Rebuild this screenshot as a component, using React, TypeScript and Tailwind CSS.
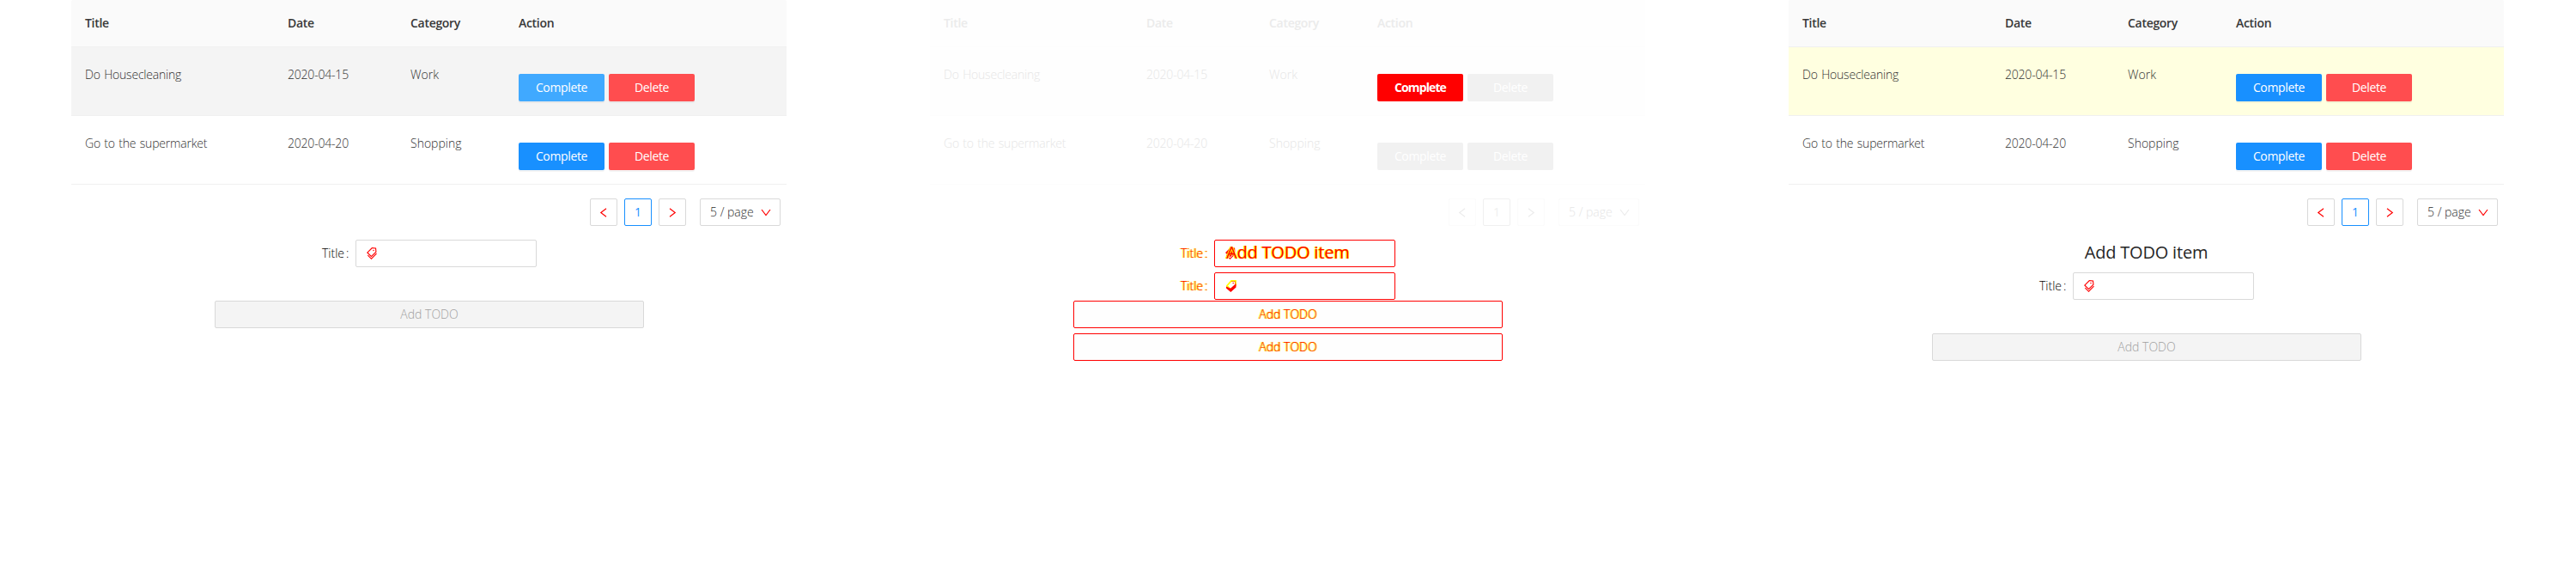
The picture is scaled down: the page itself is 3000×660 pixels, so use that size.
import { AiFillTags, AiOutlineTags } from "react-icons/ai";

type Variant = "before" | "diff" | "after";

const rows = [
  { title: "Do Housecleaning", date: "2020-04-15", category: "Work" },
  { title: "Go to the supermarket", date: "2020-04-20", category: "Shopping" },
];

const cols = "grid grid-cols-[236px_143px_126px_1fr]";
const fringe = "[text-shadow:1px_0_#ffff00,-1px_0_#ffff00]";

function TodoTable({ variant }: { variant: Variant }) {
  const diff = variant === "diff";
  const line = diff ? "border-[#fdfdfd]" : "border-[#f0f0f0]";
  const head = diff ? "bg-[#fefefe] text-[#ebebeb]" : "bg-[#fafafa] text-[#383838]";
  const body = diff ? "text-[#e6e6e6]" : "text-[#303030]";
  const firstRow = diff ? "bg-[#fefefe]" : variant === "before" ? "bg-[#f4f4f4]" : "bg-[#ffffe0]";
  const firstComplete = diff
    ? "bg-[#ff0000] font-bold tracking-[-0.9px]"
    : variant === "before"
      ? "bg-[#40a9ff] tracking-[-0.35px]"
      : "bg-[#1890ff] tracking-[-0.35px]";
  const shadow = diff ? "" : "shadow-[0_2px_0_rgba(0,0,0,0.045)]";
  const btn = "flex h-8 w-[100px] items-center justify-center rounded-[2px] text-white";
  return (
    <div>
      <div className={`${cols} h-[55px] items-center border-b pl-4 font-semibold tracking-[-0.3px] ${line} ${head} ${diff ? "" : "rounded-t-[2px]"}`}>
        <span>Title</span>
        <span>Date</span>
        <span>Category</span>
        <span>Action</span>
      </div>
      {rows.map((r, i) => (
        <div key={r.title} className={`${cols} h-20 items-start border-b pl-4 pt-[21px] font-light tracking-[-0.2px] [word-spacing:1px] ${line} ${body} ${i === 0 ? firstRow : ""}`}>
          <span>{r.title}</span>
          <span>{r.date}</span>
          <span className="tracking-normal">{r.category}</span>
          <div className="mt-2.5 flex gap-[5px] font-normal">
            <div className={`${btn} ${shadow} ${i === 0 ? firstComplete : diff ? "bg-[#f1f1f1] tracking-[-0.35px]" : "bg-[#1890ff] tracking-[-0.35px]"}`}>Complete</div>
            <div className={`${btn} ${shadow} tracking-[-0.35px] ${diff ? "bg-[#f1f1f1]" : "bg-[#ff4d4f]"}`}>Delete</div>
          </div>
        </div>
      ))}
    </div>
  );
}

function Chevron({ d, className = "" }: { d: string; className?: string }) {
  return (
    <svg width="12" height="12" viewBox="0 0 12 12" fill="none" stroke="currentColor" strokeWidth="1.2" className={className}>
      <path d={d} />
    </svg>
  );
}

function Pager({ diff }: { diff: boolean }) {
  const box = `flex size-8 items-center justify-center rounded-[2px] border ${diff ? "border-[#fbfbfb] text-[#ececec]" : "border-[#d9d9d9] text-[#ff0000]"}`;
  return (
    <div className="flex h-8 justify-end pr-[7px]">
      <div className={box}><Chevron d="M9 1.800 2.800 6.500 9 11.200" /></div>
      <div className={`ml-2 flex size-8 items-center justify-center rounded-[2px] border ${diff ? "border-[#f0f0f0] text-[#f0f0f0]" : "border-[#1890ff] text-[#1890ff]"}`}>1</div>
      <div className={`ml-2 ${box}`}><Chevron d="M3 1.800 9.200 6.500 3 11.200" /></div>
      <div className={`ml-4 flex h-8 w-[94px] items-center rounded-[2px] border pl-[11px] font-light ${diff ? "border-[#fbfbfb] text-[#e6e6e6]" : "border-[#d9d9d9] text-[#303030]"}`}>
        <span className="w-[59px] whitespace-nowrap">5 / page</span>
        <Chevron d="M1 3 6 9.600 11 3" className={diff ? "text-[#ececec]" : "text-[#ff0000]"} />
      </div>
    </div>
  );
}

function DiffTags() {
  return (
    <svg width="14" height="16" viewBox="0 0 14 16" fill="none">
      <path d="M2 7.500 7 2h5v5L6.500 12 2 8Z" stroke="#ffff00" strokeWidth="1.8" />
      <path d="M7 2.500h4.500v4" stroke="#ff7a00" strokeWidth="0.8" />
      <path d="M1 8.500 6 10.800 12.500 5v4.500L6.300 15 1 10.500Z" fill="#ff0000" />
      <path d="M8.500 4.500h1.500" stroke="#ff0000" />
    </svg>
  );
}

function TitleField({ diff, overlapped }: { diff?: boolean; overlapped?: boolean }) {
  return (
    <div className="flex h-8 items-center pl-[292px]">
      <span className={`flex w-[39px] gap-[2px] whitespace-nowrap font-light ${diff ? `text-[#ff0000] ${fringe}` : "text-black"}`}>
        <span>Title</span>
        <span>:</span>
      </span>
      <div className={`flex h-8 w-[211px] items-center rounded-[2px] border pl-[10px] ${diff ? "border-[#ff0000]" : "border-[#d9d9d9]"}`}>
        {!diff && <AiOutlineTags size={16} className="text-[#ff0000]" />}
        {diff && overlapped && <AiFillTags size={16} className="text-[#ff0000]" />}
        {diff && !overlapped && <div className="pl-0.5"><DiffTags /></div>}
      </div>
    </div>
  );
}

function AddButton({ diff }: { diff?: boolean }) {
  return (
    <div className={`ml-[167px] flex h-8 w-[500px] items-center justify-center rounded-[2px] border font-light ${diff ? `border-[#ff0000] bg-[#fefefe] text-[#ff0000] ${fringe}` : "border-[#d9d9d9] bg-[#f4f4f4] text-[#a0a0a0]"}`}>
      Add TODO
    </div>
  );
}

function Panel({ variant }: { variant: Variant }) {
  const diff = variant === "diff";
  return (
    <section className="w-[1000px] pl-[83px] pr-[84px]">
      <TodoTable variant={variant} />
      <div className="py-4"><Pager diff={diff} /></div>
      {variant === "before" && (
        <div>
          <TitleField />
          <div className="pt-[39px]"><AddButton /></div>
        </div>
      )}
      {variant === "diff" && (
        <div>
          <div className="relative">
            <TitleField diff overlapped />
            <span className={`absolute left-[345px] top-0 whitespace-nowrap text-xl font-normal leading-[30px] tracking-[-0.2px] text-[#ff0000] ${fringe}`}>Add TODO item</span>
          </div>
          <div className="pt-1.5"><TitleField diff /></div>
          <div className="pt-px"><AddButton diff /></div>
          <div className="pt-1.5"><AddButton diff /></div>
        </div>
      )}
      {variant === "after" && (
        <div>
          <h2 className="h-[38px] whitespace-nowrap text-center text-xl font-normal leading-[30px] tracking-[-0.2px] text-[#262626]">Add TODO item</h2>
          <TitleField />
          <div className="pt-[39px]"><AddButton /></div>
        </div>
      )}
    </section>
  );
}

export default function App() {
  return (
    <main className="flex h-[660px] w-[3000px] overflow-hidden bg-white font-['Open_Sans','Noto_Sans',sans-serif] text-sm leading-[22px]">
      <Panel variant="before" />
      <Panel variant="diff" />
      <Panel variant="after" />
    </main>
  );
}
